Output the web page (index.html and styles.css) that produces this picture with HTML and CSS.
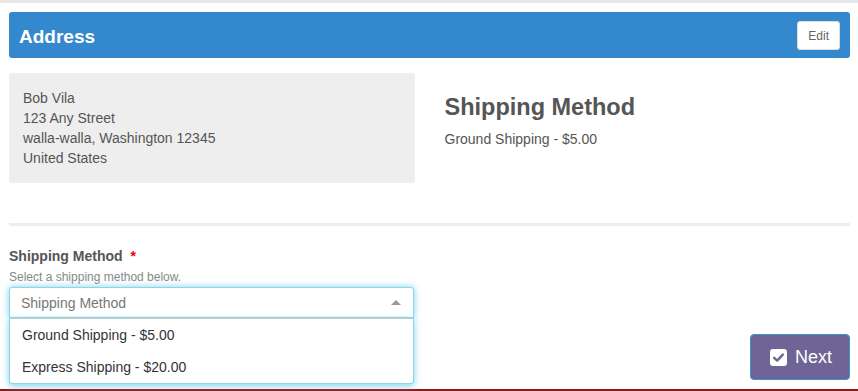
FILE: index.html
```html
<!DOCTYPE html>
<html lang="en">
<head>
    <meta charset="UTF-8">
    <meta name="viewport" content="width=device-width, initial-scale=1.0">
    <title>Checkout - Address</title>
    <link rel="stylesheet" href="styles.css">
</head>
<body>
    <div class="topline"></div>
    <div class="page">
        <div class="panel-heading">
            <h2>Address</h2>
            <button class="btn-edit">Edit</button>
        </div>

        <div class="row">
            <div class="address-box">
                Bob Vila<br>
                123 Any Street<br>
                walla-walla, Washington 12345<br>
                United States
            </div>
            <div class="summary">
                <h3>Shipping Method</h3>
                <p>Ground Shipping - $5.00</p>
            </div>
        </div>

        <hr class="divider">

        <div class="form-group">
            <label class="field-label">Shipping Method <span class="required">*</span></label>
            <div class="help">Select a shipping method below.</div>
            <div class="select-wrap">
                <div class="select open">
                    <span class="placeholder">Shipping Method</span>
                    <span class="caret"></span>
                </div>
                <ul class="options">
                    <li>Ground Shipping - $5.00</li>
                    <li>Express Shipping - $20.00</li>
                </ul>
            </div>
        </div>

        <div class="actions">
            <button class="btn-next">
                <svg width="17" height="17" viewBox="0 0 17 17">
                    <rect x="0" y="0" width="17" height="17" rx="3" fill="#fff"/>
                    <path d="M4.2 8.8 L7.2 11.6 L12.8 5.6" fill="none" stroke="#6e6496" stroke-width="2.4" stroke-linecap="round" stroke-linejoin="round"/>
                </svg>
                Next
            </button>
        </div>
    </div>
    <div class="footer-line"></div>
</body>
</html>
```

FILE: styles.css
```css
body {
    margin: 0;
    font-family: "Liberation Sans", Arial, sans-serif;
    font-size: 14px;
    color: #555;
    background: #fff;
}
.topline {
    height: 3px;
    background-color: #e8e8e8;
}
.page {
    padding: 9px 8px 0 9px;
}
.panel-heading {
    display: flex;
    align-items: center;
    justify-content: space-between;
    height: 46px;
    padding: 0 10px;
    background-color: #3488cd;
    border-radius: 3px;
}
.panel-heading h2 {
    margin: 0;
    padding-top: 3px;
    color: #fff;
    font-size: 19px;
    font-weight: bold;
}
.btn-edit {
    height: 29px;
    margin-top: 1px;
    padding: 0 10px;
    background-color: #fff;
    border: 1px solid #ddd;
    border-radius: 3px;
    color: #666;
    font-family: inherit;
    font-size: 12px;
}
.row {
    display: grid;
    grid-template-columns: 1fr 1fr;
    gap: 30px;
    margin-top: 15px;
}
.address-box {
    background-color: #eee;
    border-radius: 3px;
    padding: 15px 14px;
    line-height: 20px;
    height: 80px;
}
.summary h3 {
    margin: 19px 0 0;
    font-size: 23.5px;
    font-weight: bold;
    line-height: 30px;
    color: #555;
}
.summary p {
    margin: 7px 0 0;
    line-height: 20px;
}
.divider {
    margin: 40px 0 0;
    border: 0;
    border-top: 3px solid #eee;
}
.form-group {
    margin-top: 20px;
}
.field-label {
    display: block;
    font-weight: bold;
    line-height: 20px;
}
.required {
    color: #e00;
    margin-left: 4px;
}
.help {
    font-size: 12px;
    color: #888;
    line-height: 16px;
    margin-top: 3px;
}
.select-wrap {
    position: relative;
    width: 405px;
    margin-top: 2px;
}
.select {
    display: flex;
    align-items: center;
    justify-content: space-between;
    height: 29px;
    padding: 0 11px;
    border: 1px solid #8cd6ea;
    border-radius: 3px 3px 0 0;
    box-shadow: 0 0 7px rgba(91, 200, 230, 0.8);
    background: #fff;
}
.placeholder {
    color: #777;
}
.caret {
    width: 0;
    height: 0;
    border-left: 5px solid transparent;
    border-right: 5px solid transparent;
    border-bottom: 5px solid #999;
    margin-right: 1px;
}
.options {
    position: absolute;
    left: 0;
    right: 0;
    top: 31px;
    margin: 0;
    padding: 0;
    list-style: none;
    background: #fff;
    border: 1px solid #8cd6ea;
    border-top-color: #ccc;
    border-radius: 0 0 3px 3px;
    box-shadow: 0 2px 7px rgba(91, 200, 230, 0.8);
    color: #333;
}
.options li {
    padding: 0 12px;
    line-height: 32px;
}
.actions {
    display: flex;
    justify-content: flex-end;
    margin-top: 16px;
}
.btn-next {
    display: flex;
    align-items: center;
    gap: 8px;
    width: 100px;
    height: 46px;
    padding: 0 0 0 19px;
    background-color: #6e6496;
    border: 1px solid #3d8fd1;
    border-radius: 4px;
    color: #fff;
    font-family: inherit;
    font-size: 18px;
}
.footer-line {
    margin-top: 9px;
    height: 2px;
    background-color: #8b1a1a;
}
```
